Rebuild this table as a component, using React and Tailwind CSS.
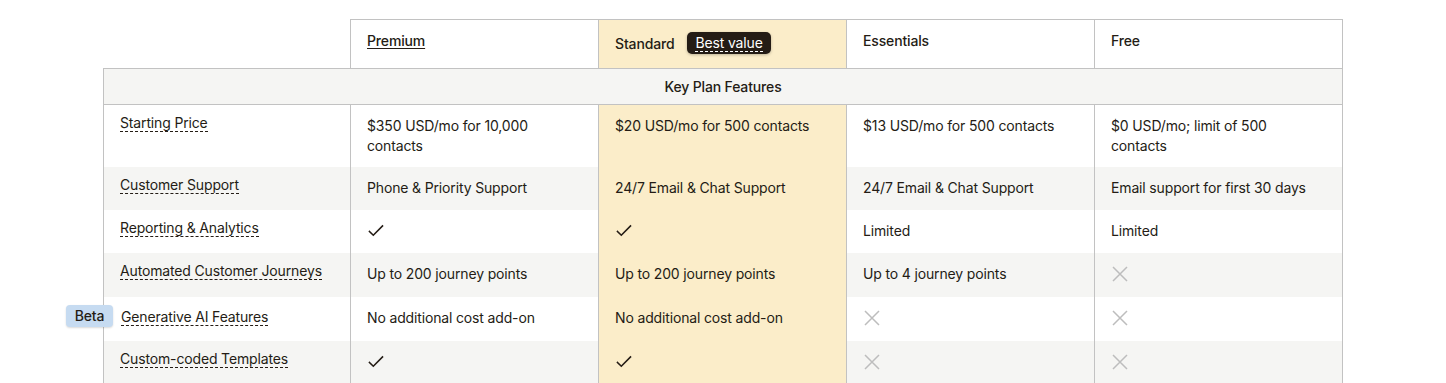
import React from 'react';

const rows = [
  { label: 'Starting Price', cells: ['$350 USD/mo for 10,000 contacts', '$20 USD/mo for 500 contacts', '$13 USD/mo for 500 contacts', '$0 USD/mo; limit of 500 contacts'], h: 'h-[62px]' },
  { label: 'Customer Support', cells: ['Phone & Priority Support', '24/7 Email & Chat Support', '24/7 Email & Chat Support', 'Email support for first 30 days'], h: 'h-[43px]' },
  { label: 'Reporting & Analytics', cells: ['check', 'check', 'Limited', 'Limited'], h: 'h-[43px]' },
  { label: 'Automated Customer Journeys', cells: ['Up to 200 journey points', 'Up to 200 journey points', 'Up to 4 journey points', 'x'], h: 'h-[44px]' },
  { label: 'Generative AI Features', cells: ['No additional cost add-on', 'No additional cost add-on', 'x', 'x'], beta: true, h: 'h-[44px]' },
  { label: 'Custom-coded Templates', cells: ['check', 'check', 'x', 'x'], h: 'h-[43px]' },
];

function Check() {
  return (
    <svg width="18" height="18" viewBox="0 0 18 18" fill="none" className="mt-[1px]">
      <path d="M2.5 9.5 L6.3 13.2 L15.5 4" stroke="#241c15" strokeWidth="1.6" strokeLinecap="square" />
    </svg>
  );
}

function Cross() {
  return (
    <svg width="18" height="18" viewBox="0 0 18 18" fill="none" className="mt-[1px]">
      <path d="M2 2 L16 16 M16 2 L2 16" stroke="#bdbdbd" strokeWidth="1.5" />
    </svg>
  );
}

function Value({ v }) {
  if (v === 'check') return <Check />;
  if (v === 'x') return <Cross />;
  return <span>{v}</span>;
}

export default function App() {
  return (
    <div className="min-h-[383px] bg-white text-[14px] leading-5 tracking-[-0.15px] text-[#241c15]" style={{ fontFamily: 'Inter, "Liberation Sans", sans-serif' }}>
      <div className="mx-auto w-[1240px] pt-[19px]">
        {/* plan header */}
        <div className="grid grid-cols-[247px_248px_248px_248px_249px]">
          <div />
          <div className="h-[49px] border-t border-l border-[#c2c2c2] px-4 pt-[11px]">
            <span className="font-medium underline underline-offset-2">Premium</span>
          </div>
          <div className="h-[49px] border-t border-l border-[#c2c2c2] bg-[#fbedc9] px-4 pt-3">
            <div className="flex items-center gap-[13px]">
              <span className="font-medium pt-[2px]">Standard</span>
              <span className="flex h-[22px] items-center rounded-[5px] bg-[#241c15] px-2 text-white shadow-[0_1px_3px_rgba(0,0,0,0.25)]">
                <span className="border-b border-dashed border-white leading-[16px]">Best value</span>
              </span>
            </div>
          </div>
          <div className="h-[49px] border-t border-l border-[#c2c2c2] px-4 pt-[11px]">
            <span className="font-medium">Essentials</span>
          </div>
          <div className="h-[49px] border-t border-l border-r border-[#c2c2c2] px-4 pt-[11px]">
            <span className="font-medium">Free</span>
          </div>
        </div>

        {/* section title */}
        <div className="flex h-[37px] items-center justify-center border border-[#c2c2c2] bg-[#f5f5f3] font-medium">
          Key Plan Features
        </div>

        {rows.map((row, i) => {
          const gray = i % 2 === 1;
          return (
            <div key={row.label} className={`grid grid-cols-[247px_248px_248px_248px_249px] ${row.h} ${gray ? 'bg-[#f5f5f3]' : 'bg-white'}`}>
              <div className={`relative border-l border-[#c2c2c2] px-4 ${row.beta ? 'pt-[10px]' : 'pt-[8px]'}`}>
                {row.beta && (
                  <span className="absolute left-[-38px] top-2 z-10 flex h-[22px] w-[47px] items-center justify-center rounded-[4px] bg-[#c6dbf1] font-medium shadow-[0_1px_2px_rgba(0,0,0,0.15)]">
                    Beta
                  </span>
                )}
                <span className={`border-b border-dashed border-[#241c15] ${row.beta ? 'ml-[1px]' : ''}`}>{row.label}</span>
              </div>
              {row.cells.map((c, j) => (
                <div
                  key={j}
                  className={`border-l border-[#c2c2c2] px-4 pt-[11px] ${j === 1 ? 'bg-[#fbedc9]' : ''} ${j === 3 ? 'border-r' : ''}`}
                >
                  <Value v={c} />
                </div>
              ))}
            </div>
          );
        })}
      </div>
    </div>
  );
}
